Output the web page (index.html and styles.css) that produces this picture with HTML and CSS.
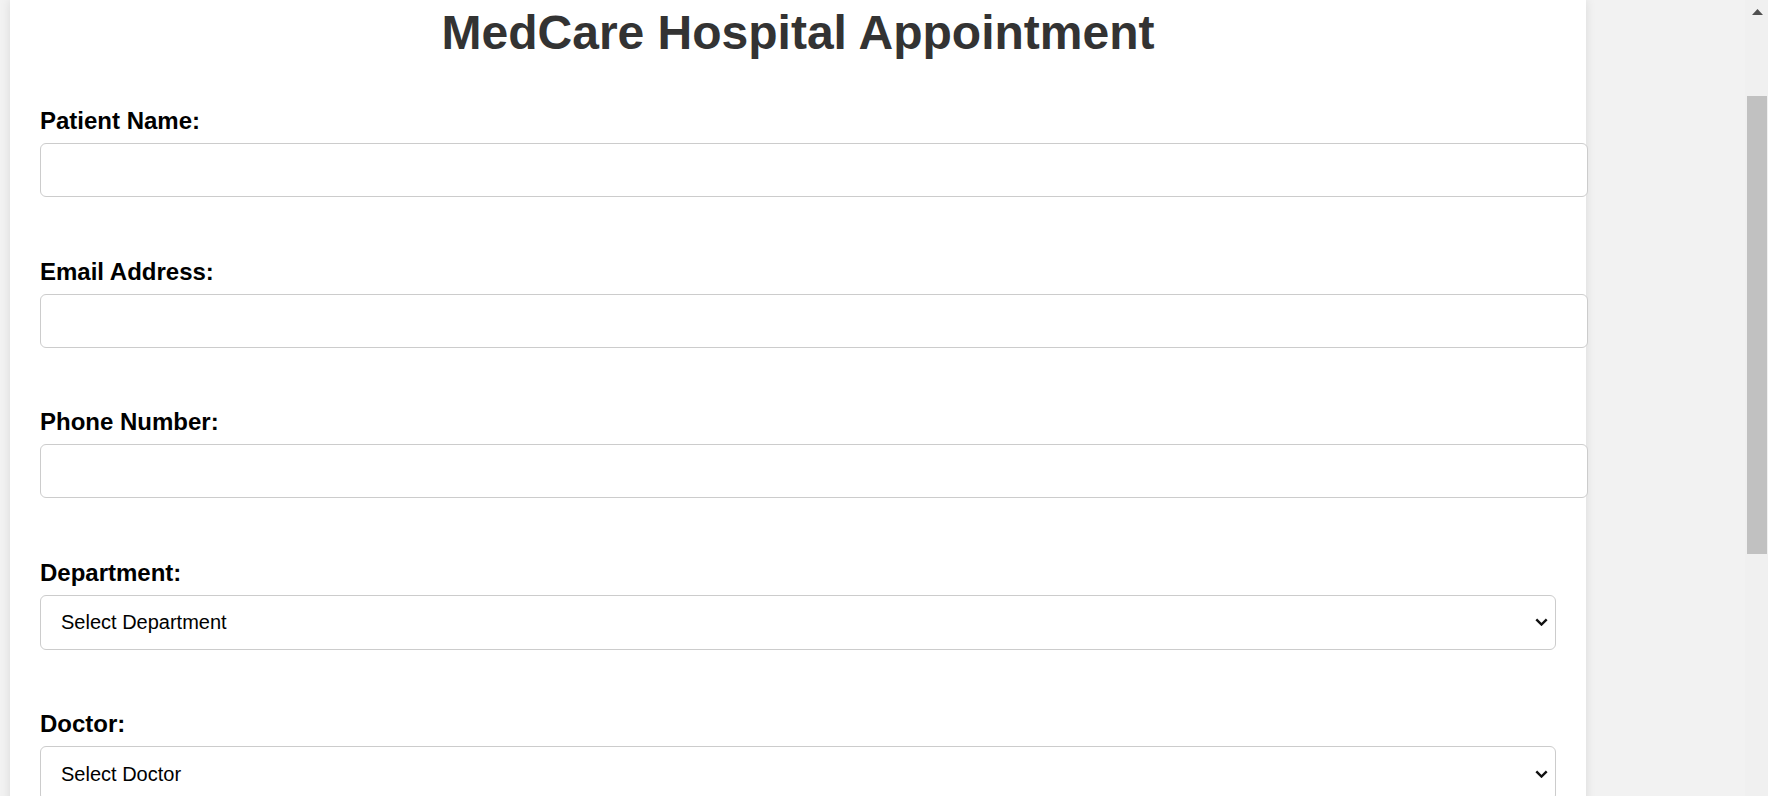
FILE: index.html
```html
<!DOCTYPE html>
<html lang="en">
<head>
<meta charset="utf-8">
<title>MedCare Hospital Appointment</title>
<link rel="stylesheet" href="styles.css">
</head>
<body>
<div class="viewport">
  <main class="page">
    <div class="container">
      <h1 class="title">MedCare Hospital Appointment</h1>
      <form class="form">
        <div class="group">
          <label class="label" for="name">Patient Name:</label>
          <input class="field" id="name" type="text">
        </div>
        <div class="group">
          <label class="label" for="email">Email Address:</label>
          <input class="field" id="email" type="email">
        </div>
        <div class="group">
          <label class="label" for="phone">Phone Number:</label>
          <input class="field" id="phone" type="tel">
        </div>
        <div class="group">
          <label class="label" for="dept">Department:</label>
          <div class="select-wrap">
            <select class="select" id="dept">
              <option>Select Department</option>
            </select>
            <svg class="chevron" width="13" height="8" viewBox="0 0 13 8" aria-hidden="true"><path d="M1.3 1.3 L6.5 6.5 L11.7 1.3" fill="none" stroke="#111" stroke-width="2.4"/></svg>
          </div>
        </div>
        <div class="group">
          <label class="label" for="doctor">Doctor:</label>
          <div class="select-wrap">
            <select class="select" id="doctor">
              <option>Select Doctor</option>
            </select>
            <svg class="chevron" width="13" height="8" viewBox="0 0 13 8" aria-hidden="true"><path d="M1.3 1.3 L6.5 6.5 L11.7 1.3" fill="none" stroke="#111" stroke-width="2.4"/></svg>
          </div>
        </div>
      </form>
    </div>
  </main>
  <aside class="scrollbar" aria-hidden="true">
    <svg class="sb-arrow" width="11" height="6" viewBox="0 0 11 6"><path d="M5.5 0 L11 6 L0 6 Z" fill="#505050"/></svg>
    <div class="sb-thumb"></div>
  </aside>
</div>
</body>
</html>
```
FILE: styles.css
```css
html, body {
  margin: 0;
  padding: 0;
  height: 100%;
  overflow: hidden;
}

body {
  font-family: "Liberation Sans", Arial, sans-serif;
  background: #f2f2f2;
}

.viewport {
  display: flex;
  height: 796px;
  overflow: hidden;
}

.page {
  flex: 1;
  padding-left: 10px;
  background: #f2f2f2;
  overflow: hidden;
}

.container {
  width: 1516px;
  padding: 5px 30px 40px;
  background: #ffffff;
  box-shadow: 0 0 10px rgba(0, 0, 0, 0.1);
  min-height: 900px;
}

.title {
  margin: 0 0 46px;
  font-size: 48px;
  line-height: 56px;
  font-weight: bold;
  color: #333333;
  text-align: center;
}

.form {
  margin: 0;
}

.group {
  margin-bottom: 60.5px;
}

.label {
  display: block;
  margin-bottom: 8px;
  font-size: 24px;
  line-height: 28px;
  font-weight: bold;
  color: #000000;
}

.field {
  display: block;
  box-sizing: content-box;
  width: 100%;
  height: 22px;
  padding: 15px;
  margin: 0;
  border: 1px solid #cccccc;
  border-radius: 6px;
  font-family: "Liberation Sans", Arial, sans-serif;
  font-size: 20px;
  line-height: 22px;
  background: #ffffff;
  outline: none;
}

.select-wrap {
  position: relative;
}

.select {
  display: block;
  box-sizing: border-box;
  width: 100%;
  height: 55px;
  margin: 0;
  padding: 0 40px 0 20px;
  border: 1px solid #cccccc;
  border-radius: 6px;
  background: #ffffff;
  color: #000000;
  font-family: "Liberation Sans", Arial, sans-serif;
  font-size: 20px;
  -webkit-appearance: none;
  appearance: none;
  outline: none;
}

.chevron {
  position: absolute;
  right: 8px;
  top: 50%;
  transform: translateY(-50%);
  pointer-events: none;
}

.scrollbar {
  width: 23px;
  flex: 0 0 23px;
  background: #f0f0f0;
  display: flex;
  flex-direction: column;
}

.sb-arrow {
  display: block;
  margin: 9px 0 0 7px;
}

.sb-thumb {
  width: 20px;
  height: 458px;
  margin: 81px 0 0 2px;
  background: #c1c1c1;
}
```
